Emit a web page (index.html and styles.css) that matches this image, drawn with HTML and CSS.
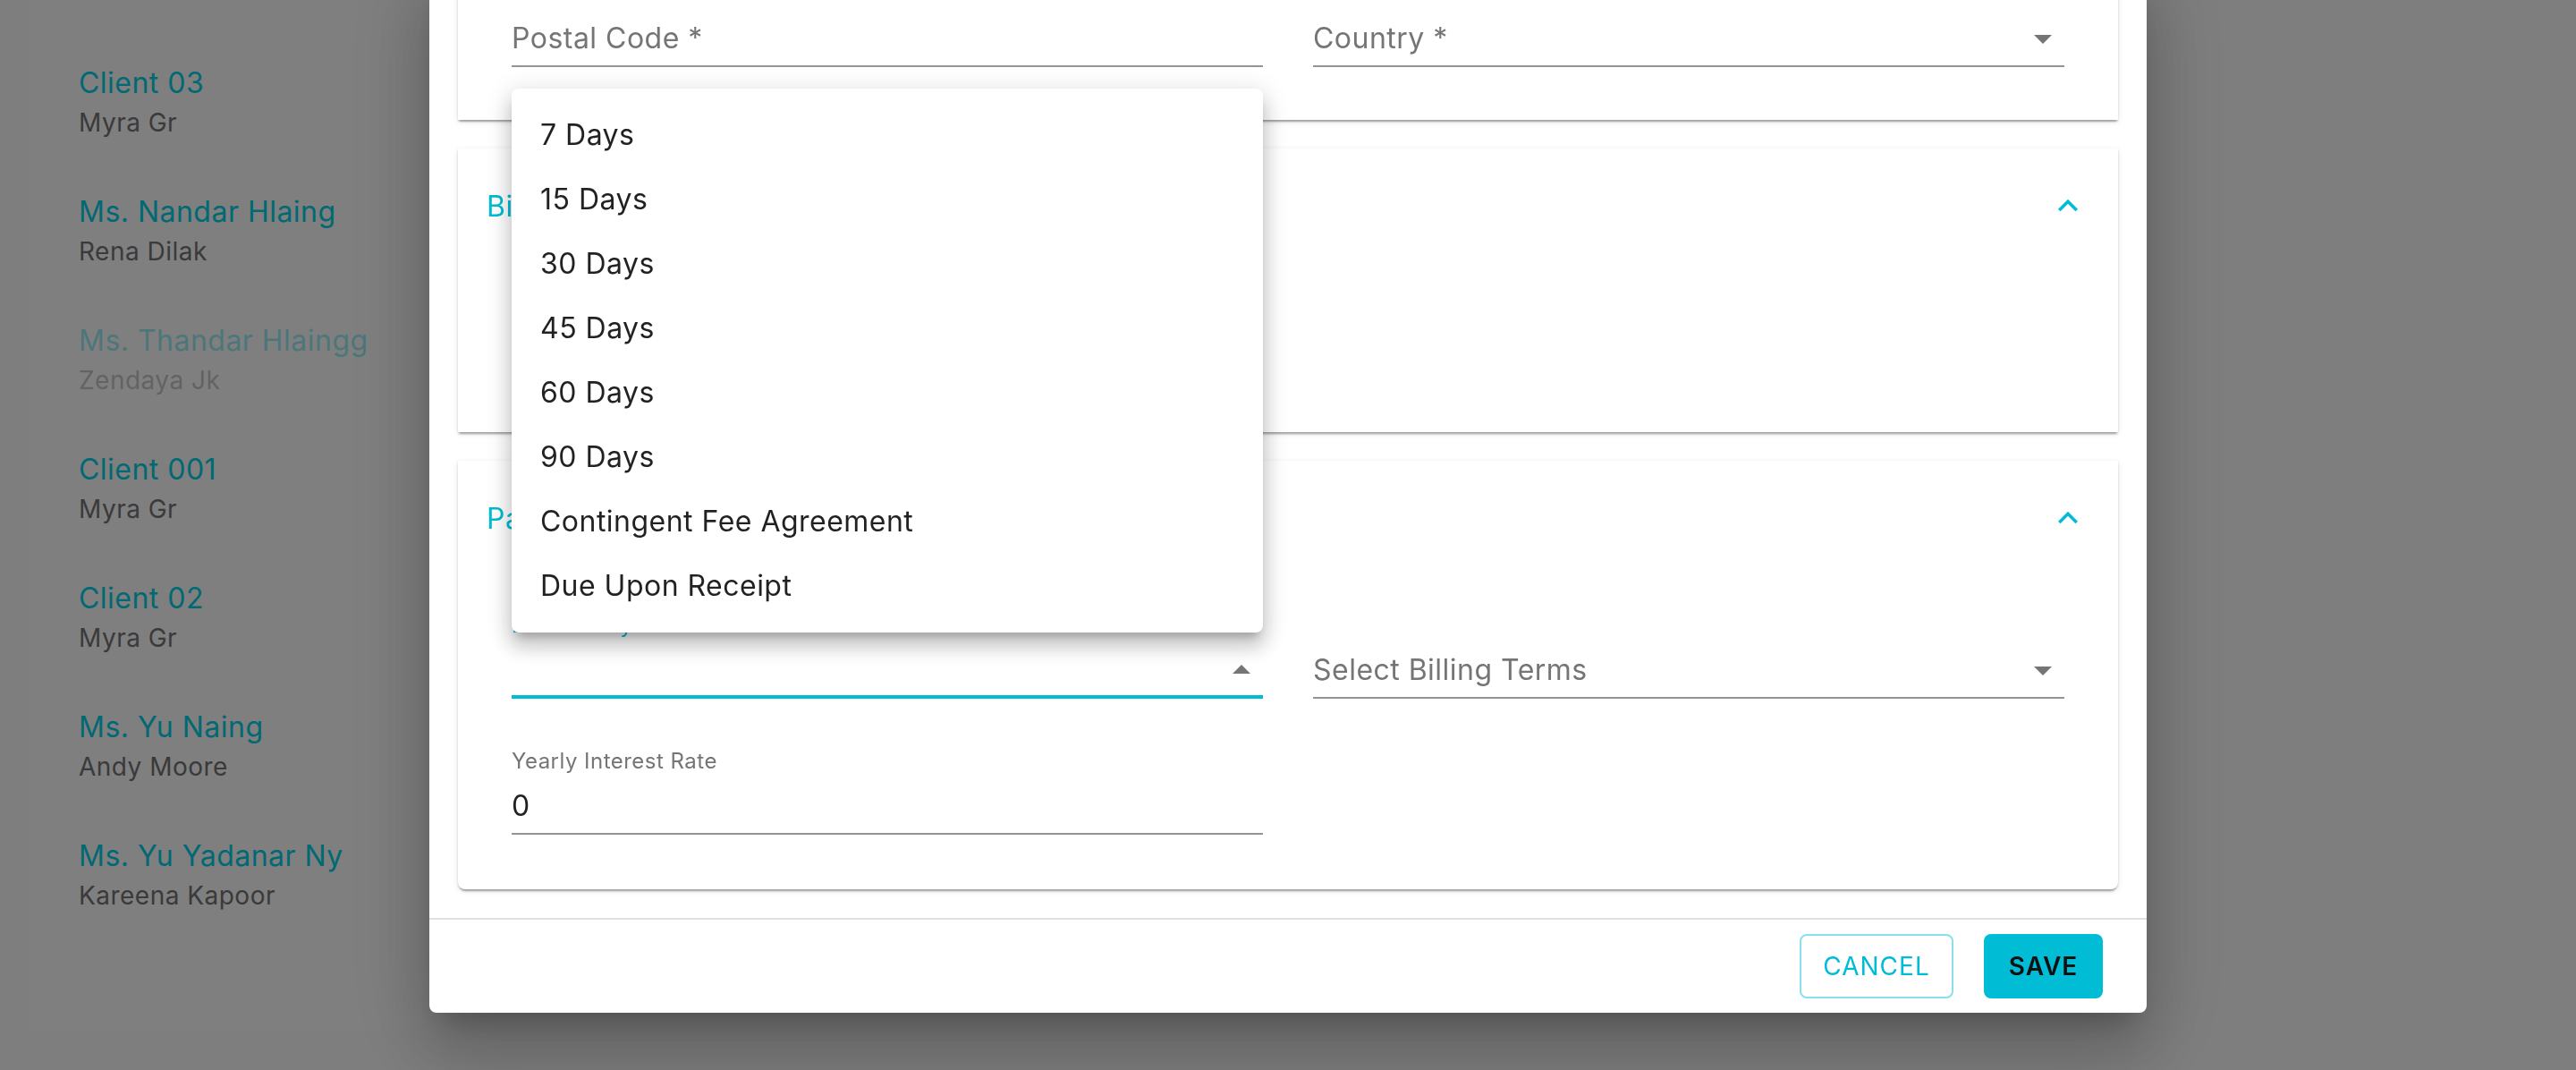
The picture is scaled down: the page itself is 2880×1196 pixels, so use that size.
FILE: index.html
```html
<!DOCTYPE html>
<html lang="en">
<head>
<meta charset="utf-8">
<title>Edit Client</title>
<link rel="stylesheet" href="styles.css">
</head>
<body>
<div class="page">
  <aside class="client-list">
    <div class="client"><div class="client-name">Client 03</div><div class="client-contact">Myra Gr</div></div>
    <div class="client"><div class="client-name">Ms. Nandar Hlaing</div><div class="client-contact">Rena Dilak</div></div>
    <div class="client is-muted"><div class="client-name">Ms. Thandar Hlaingg</div><div class="client-contact">Zendaya Jk</div></div>
    <div class="client"><div class="client-name">Client 001</div><div class="client-contact">Myra Gr</div></div>
    <div class="client"><div class="client-name">Client 02</div><div class="client-contact">Myra Gr</div></div>
    <div class="client"><div class="client-name">Ms. Yu Naing</div><div class="client-contact">Andy Moore</div></div>
    <div class="client"><div class="client-name">Ms. Yu Yadanar Ny</div><div class="client-contact">Kareena Kapoor</div></div>
  </aside>
</div>

<div class="backdrop"></div>

<div class="dialog">
  <div class="dialog-content">
    <section class="card card-first">
      <div class="card-body card-body-address">
        <div class="field">
          <div class="field-label"></div>
          <div class="field-input"><span class="placeholder">Postal Code *</span></div>
        </div>
        <div class="field">
          <div class="field-label"></div>
          <div class="field-input"><span class="placeholder">Country *</span>
            <svg class="select-arrow" viewBox="0 0 24 24"><path d="M7 10l5 5 5-5z"/></svg>
          </div>
        </div>
      </div>
    </section>

    <section class="card">
      <header class="card-header">
        <span class="card-title">Billing Information</span>
        <svg class="chevron" viewBox="0 0 24 24"><path d="M12 8l-6 6 1.41 1.41L12 10.83l4.59 4.58L18 14z"/></svg>
      </header>
      <div class="card-body-blank"></div>
    </section>

    <section class="card card-last">
      <header class="card-header">
        <span class="card-title">Payment Settings</span>
        <svg class="chevron" viewBox="0 0 24 24"><path d="M12 8l-6 6 1.41 1.41L12 10.83l4.59 4.58L18 14z"/></svg>
      </header>
      <div class="card-body">
        <div class="field is-focused">
          <div class="field-label">Default Payment Terms</div>
          <div class="field-input"><span class="value"></span>
            <svg class="select-arrow" viewBox="0 0 24 24"><path d="M7 14l5-5 5 5z"/></svg>
          </div>
        </div>
        <div class="field">
          <div class="field-label"></div>
          <div class="field-input"><span class="placeholder">Select Billing Terms</span>
            <svg class="select-arrow" viewBox="0 0 24 24"><path d="M7 10l5 5 5-5z"/></svg>
          </div>
        </div>
        <div class="field">
          <div class="field-label">Yearly Interest Rate</div>
          <div class="field-input"><span class="value">0</span></div>
        </div>
      </div>
    </section>
  </div>
  <footer class="dialog-actions">
    <button class="btn btn-outline" type="button">Cancel</button>
    <button class="btn btn-primary" type="button">Save</button>
  </footer>
</div>

<ul class="menu">
  <li class="menu-item">7 Days</li>
  <li class="menu-item">15 Days</li>
  <li class="menu-item">30 Days</li>
  <li class="menu-item">45 Days</li>
  <li class="menu-item">60 Days</li>
  <li class="menu-item">90 Days</li>
  <li class="menu-item">Contingent Fee Agreement</li>
  <li class="menu-item">Due Upon Receipt</li>
</ul>
</body>
</html>
```

FILE: styles.css
```css
* { box-sizing: border-box; }

html, body {
  margin: 0;
  width: 2880px;
  height: 1196px;
  overflow: hidden;
}

body {
  font-family: Inter, "Noto Sans", sans-serif;
  letter-spacing: 0.03em;
  background: #fdfdfd;
  color: #212121;
}

/* background page */
.page {
  height: 100%;
  padding-left: 32px;
}

.client-list {
  width: 440px;
  height: 1150px;
  background: #ffffff;
  padding: 41px 0 0 56px;
}

.client {
  padding: 28px 0;
}

.client-name {
  font-size: 32px;
  line-height: 48px;
  color: #00d2e6;
  white-space: nowrap;
}

.client-contact {
  font-size: 28px;
  line-height: 40px;
  color: #747474;
  white-space: nowrap;
}

.client.is-muted { opacity: 0.4; }

.backdrop {
  position: fixed;
  inset: 0;
  background: rgba(0, 0, 0, 0.5);
}

/* dialog */
.dialog {
  position: fixed;
  left: 480px;
  width: 1920px;
  top: -40px;
  bottom: 64px;
  background: #ffffff;
  border-radius: 8px;
  box-shadow: 0 22px 30px -14px rgba(0,0,0,0.2), 0 48px 76px 6px rgba(0,0,0,0.14), 0 18px 92px 16px rgba(0,0,0,0.12);
  display: flex;
  flex-direction: column;
}

.dialog-content {
  flex: 1;
  min-height: 0;
  overflow: hidden;
  display: flex;
  flex-direction: column;
  justify-content: flex-end;
  gap: 32px;
  padding: 0 32px 32px;
}

.card {
  flex-shrink: 0;
  background: #ffffff;
  box-shadow: 0 4px 2px -2px rgba(0,0,0,0.2), 0 2px 2px 0 rgba(0,0,0,0.14), 0 2px 6px 0 rgba(0,0,0,0.12);
}

.card-first { border-radius: 8px 8px 0 0; }
.card-last { border-radius: 0 0 8px 8px; }

.card-header {
  height: 128px;
  display: flex;
  align-items: center;
  justify-content: space-between;
  padding: 0 34px 0 32px;
}

.card-title {
  font-size: 32px;
  color: #00bcd4;
}

.chevron {
  width: 44px;
  height: 44px;
  fill: #00bcd4;
}

.card-body {
  display: grid;
  grid-template-columns: 840px 840px;
  column-gap: 56px;
  row-gap: 54px;
  align-items: end;
  padding: 40px 60px 61px;
}

.card-body-address {
  padding: 200px 60px 59px;
}

.card-body-blank {
  height: 189px;
}

/* text fields */
.field {
  display: flex;
  flex-direction: column;
}

.field-label {
  height: 32px;
  margin-bottom: 10px;
  font-size: 24px;
  line-height: 32px;
  color: #757575;
  white-space: nowrap;
}

.field-input {
  display: flex;
  align-items: center;
  height: 56px;
  padding-bottom: 6px;
  border-bottom: 2px solid #949494;
  font-size: 32px;
  line-height: 48px;
}

.field-input .value,
.field-input .placeholder {
  flex: 1;
  min-width: 0;
  white-space: nowrap;
}

.placeholder { color: #757575; }
.value { color: #212121; }

.field.is-focused .field-label { color: #00bcd4; }
.field.is-focused .field-input {
  border-bottom: 4px solid #00bcd4;
  padding-bottom: 4px;
}

.select-arrow {
  width: 48px;
  height: 48px;
  flex-shrink: 0;
  fill: #757575;
}

/* footer */
.dialog-actions {
  flex-shrink: 0;
  border-top: 2px solid #e0e0e0;
  padding: 16px 49px 16px 0;
  display: flex;
  justify-content: flex-end;
  gap: 34px;
}

.btn {
  height: 72px;
  padding: 0;
  font-family: inherit;
  font-size: 28px;
  letter-spacing: 1px;
  text-transform: uppercase;
  border-radius: 8px;
  cursor: pointer;
}

.btn-outline {
  width: 172px;
  background: #ffffff;
  color: #00bcd4;
  border: 2px solid #8adfeb;
  font-weight: 400;
}

.btn-primary {
  width: 133px;
  background: #00bcd4;
  color: #111111;
  border: none;
  font-weight: 600;
}

/* open select menu */
.menu {
  position: fixed;
  left: 572px;
  top: 99px;
  width: 840px;
  margin: 0;
  padding: 16px 0;
  list-style: none;
  background: #ffffff;
  border-radius: 8px;
  box-shadow: 0 10px 10px -6px rgba(0,0,0,0.2), 0 16px 20px 2px rgba(0,0,0,0.14), 0 6px 28px 4px rgba(0,0,0,0.12);
}

.menu-item {
  height: 72px;
  line-height: 72px;
  padding-left: 32px;
  font-size: 32px;
  color: rgba(0,0,0,0.87);
  white-space: nowrap;
}
```
